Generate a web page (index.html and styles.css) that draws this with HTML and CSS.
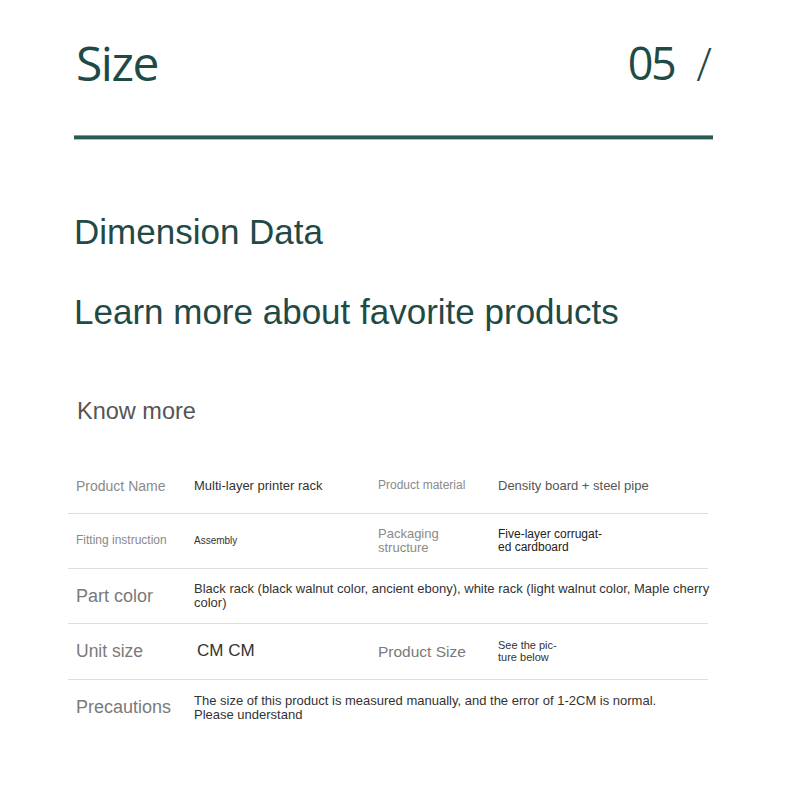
FILE: index.html
```html
<!DOCTYPE html>
<html lang="en">
<head>
<meta charset="utf-8">
<title>Size - Dimension Data</title>
<link rel="stylesheet" href="styles.css">
</head>
<body>
<div class="page">
  <header class="head">
    <h1 class="title">Size</h1>
    <div class="num"><span class="digits">05</span><span class="slash">/</span></div>
  </header>
  <div class="rule"></div>
  <h2 class="big first">Dimension Data</h2>
  <h2 class="big second">Learn more about favorite products</h2>
  <h3 class="know">Know more</h3>
  <div class="table">
    <div class="row">
      <div class="lab l14">Product Name</div>
      <div class="val v13">Multi-layer printer rack</div>
      <div class="lab l12">Product material</div>
      <div class="val v13 soft">Density board + steel pipe</div>
    </div>
    <div class="row">
      <div class="lab l12">Fitting instruction</div>
      <div class="val v10">Assembly</div>
      <div class="lab l13 tight">Packaging<br>structure</div>
      <div class="val v12 tight dark">Five-layer corrugat-<br>ed cardboard</div>
    </div>
    <div class="row">
      <div class="lab l18">Part color</div>
      <div class="val v13 wide tight">Black rack (black walnut color, ancient ebony), white rack (light walnut color, Maple cherry color)</div>
    </div>
    <div class="row">
      <div class="lab l17">Unit size</div>
      <div class="val v17 cm">CM CM</div>
      <div class="lab l155">Product Size</div>
      <div class="val v11 tight">See the pic-<br>ture below</div>
    </div>
    <div class="row last">
      <div class="lab l18">Precautions</div>
      <div class="val v13 wide tight">The size of this product is measured manually, and the error of 1-2CM is normal.<br>Please understand</div>
    </div>
  </div>
</div>
</body>
</html>
```
FILE: styles.css
```css
* { box-sizing: border-box; }
html, body { margin: 0; padding: 0; background: #fff; }
body { font-family: "Liberation Sans", Arial, sans-serif; }

.page {
  width: 790px;
  height: 790px;
  padding-left: 74px;
  overflow: hidden;
}

.head {
  width: 639px;
  padding-top: 39px;
  display: flex;
  justify-content: space-between;
  align-items: flex-start;
  color: #1f4b47;
  font-family: "Open Sans", "Noto Sans", sans-serif;
}
.title {
  margin: 0 0 0 2px;
  font-size: 48px;
  line-height: 48px;
  font-weight: 500;
  letter-spacing: -1.5px;
}
.num {
  display: flex;
  align-items: flex-start;
  font-size: 45px;
  line-height: 48px;
  font-weight: 500;
}
.digits { letter-spacing: -2.5px; }
.slash {
  margin-left: 22px;
  font-weight: 300;
  font-size: 46px;
  line-height: 46px;
  margin-top: 1px;
  margin-right: 1px;
}

.rule {
  margin-top: 48px;
  width: 639px;
  height: 5px;
  background: #2b5a56;
  border-top: 1px solid #7d9d9a;
  border-bottom: 1px solid #a9c1bf;
}

.big {
  margin: 0;
  font-weight: 400;
  font-size: 35px;
  line-height: 35px;
  color: #1f4a46;
}
.first { margin-top: 74px; }
.second { margin-top: 45px; }

.know {
  margin: 70px 0 0 3px;
  font-weight: 400;
  font-size: 23.5px;
  line-height: 24px;
  color: #555;
}

.table {
  margin: 36px 0 0 -6px;
  width: 640px;
}
.row {
  display: grid;
  grid-template-columns: 118px 184px 120px 1fr;
  align-items: center;
  height: 55px;
  padding-left: 8px;
  border-bottom: 1px solid #dedede;
}
.row:nth-child(4) { height: 56px; }
.row.last { border-bottom: none; }

.lab { color: #8a8a8a; line-height: 1.15; }
.l12 { font-size: 12px; }
.l13 { font-size: 13px; }
.l14 { font-size: 14px; }
.l155 { font-size: 15.5px; color: #7a7a7a; }
.l17 { font-size: 17.5px; color: #7a7a7a; }
.l18 { font-size: 18px; color: #7a7a7a; }

.val { color: #333; line-height: 1.2; }
.v10 { font-size: 10px; }
.v11 { font-size: 11px; }
.v12 { font-size: 12px; }
.v13 { font-size: 13px; }
.v17 { font-size: 17px; }
.soft { color: #555; }
.dark { color: #222; }
.tight { line-height: 1.05; }
.cm { padding-left: 3px; }
.wide {
  grid-column: 2 / -1;
  margin-right: -14px;
}
```
